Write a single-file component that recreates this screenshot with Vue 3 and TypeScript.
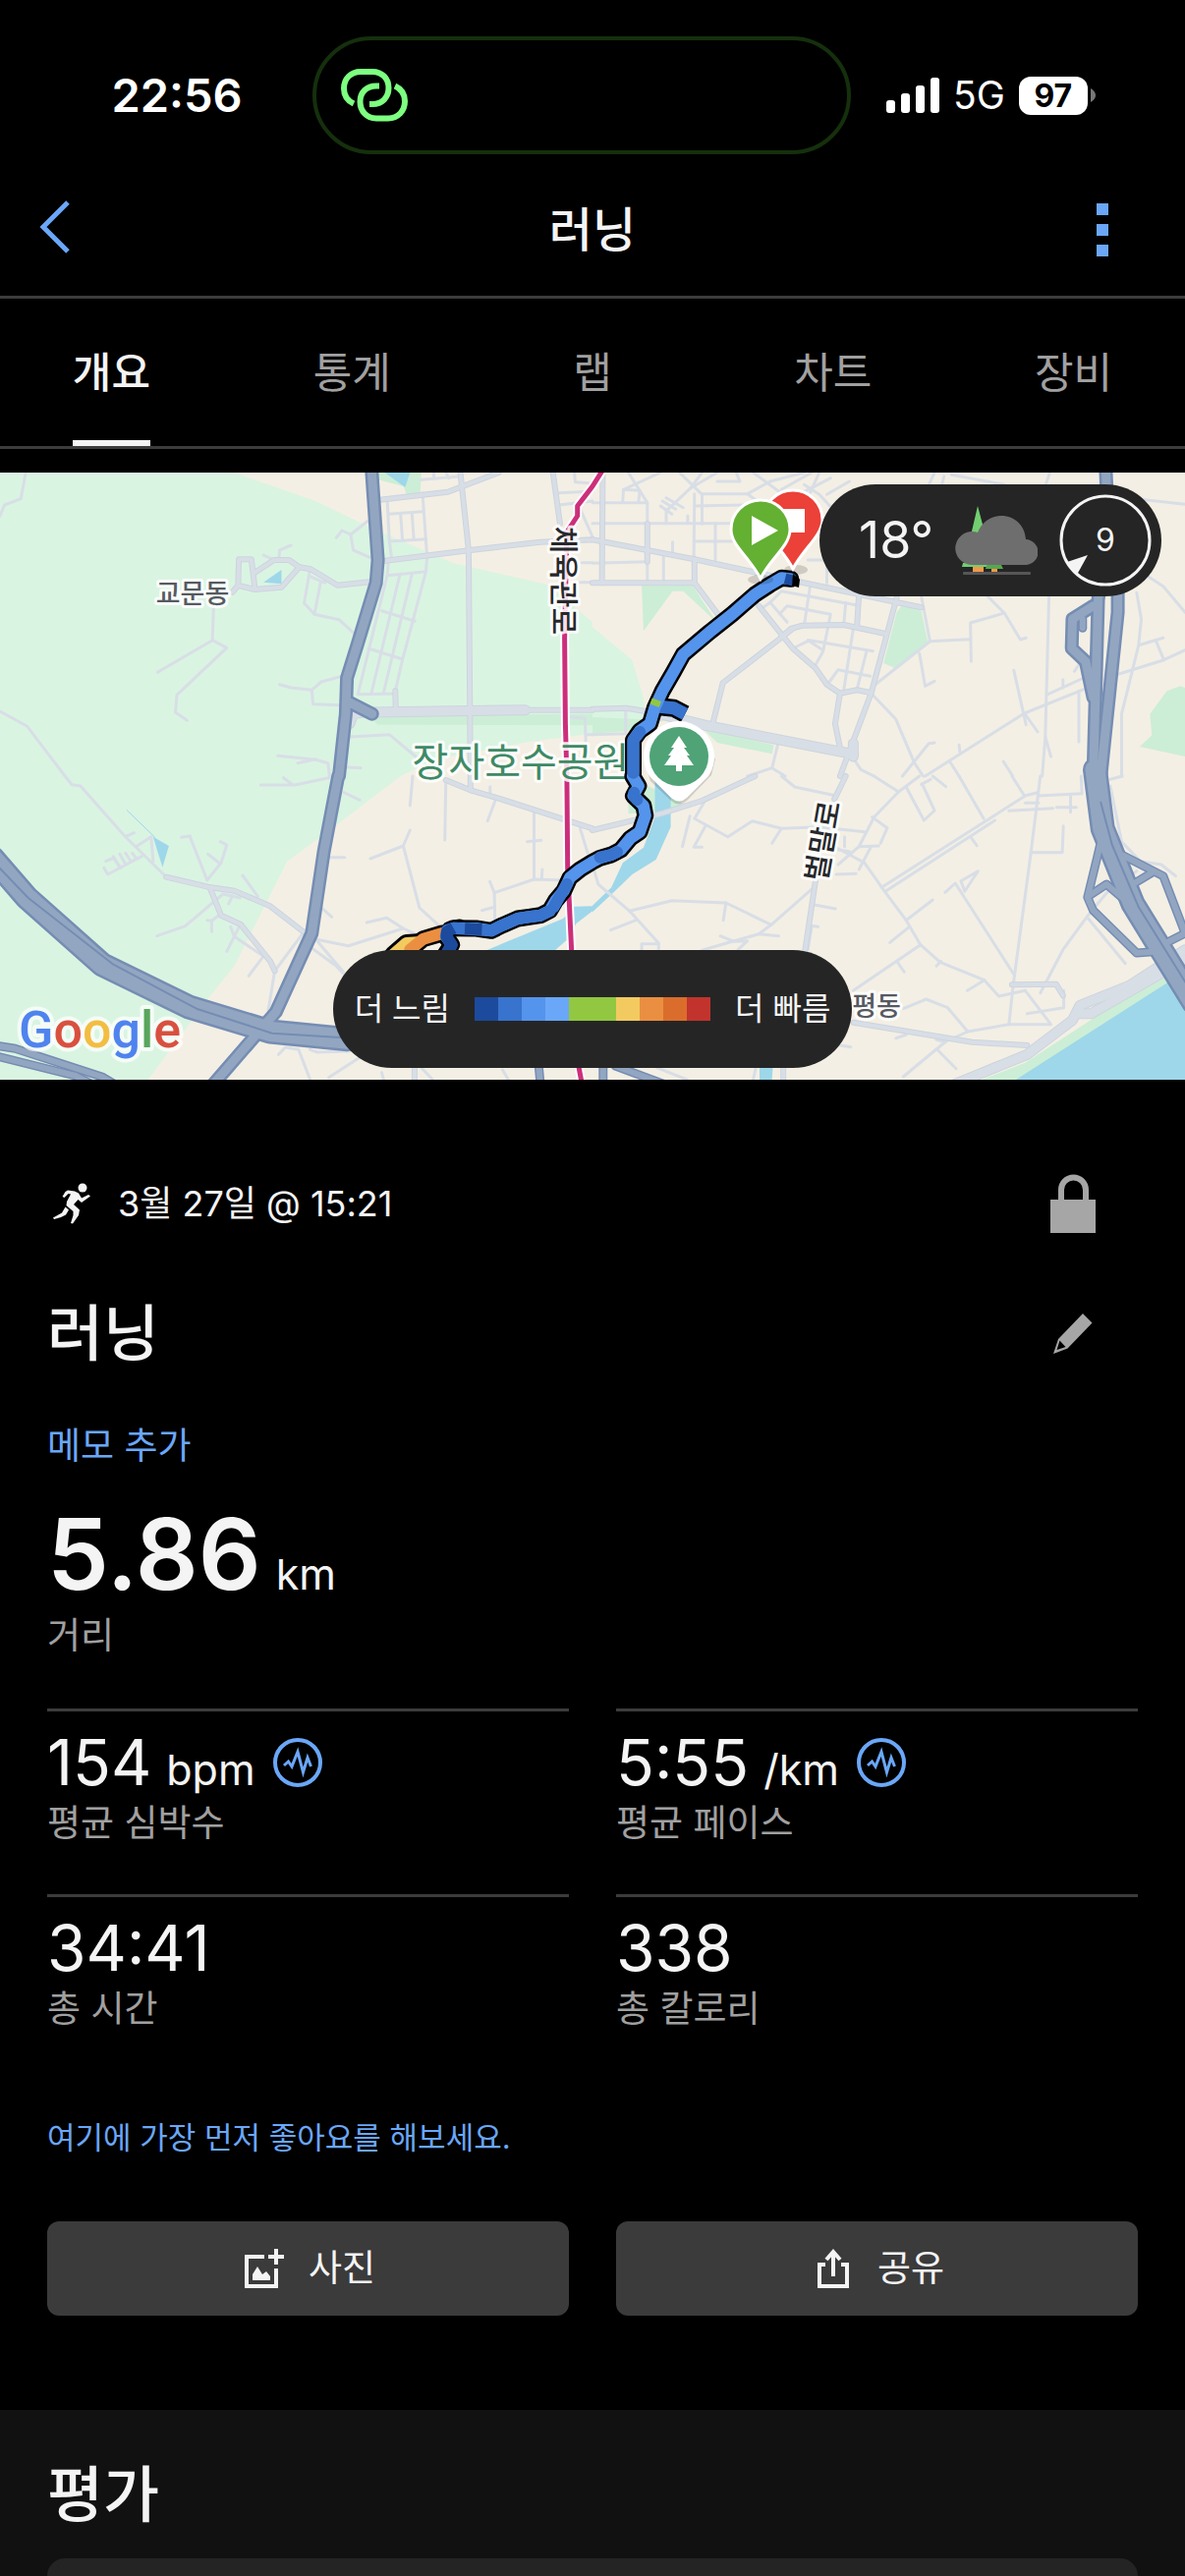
<script setup lang="ts">
import { ref } from 'vue'

type Sheet = 'A' | 'B' | 'C' | 'D'

interface Stat {
  value: string
  unit?: string
  label: string
  chart?: boolean
}

const tabs = ['개요', '통계', '랩', '차트', '장비']
const active = ref('개요')

const stats: Stat[] = [
  { value: '154', unit: 'bpm', label: '평균 심박수', chart: true },
  { value: '5:55', unit: '/km', label: '평균 페이스', chart: true },
  { value: '34:41', label: '총 시간' },
  { value: '338', label: '총 칼로리' },
]

const paceColors = [
  '#1c4a9c', '#3873cd', '#5594ec', '#6aa7f8', '#92c742',
  '#92c742', '#f2ca60', '#ea8f41', '#da6d2c', '#c2332d',
]

const origins: Record<Sheet, [number, number]> = {
  A: [0, -11],
  B: [603, -11],
  C: [0, 309],
  D: [603, 309],
}

function trace(source: string): string {
  let origin = origins.A
  const out: string[] = []
  for (const token of source.split(' ')) {
    if (token in origins) {
      origin = origins[token as Sheet]
      continue
    }
    const [x, y] = token.split(',').map(Number)
    out.push(`${(origin[0] + x / 2.6).toFixed(1)},${(origin[1] + y / 3).toFixed(1)}`)
  }
  return out.join(' ')
}

const forest = trace(
  'A 0,33 620,33 835,120 970,195 1200,310 1450,375 1568,490 B 0,505 105,605 135,720 140,790 0,830 A 1400,855 1150,910 1060,960 C 1060,0 890,150 760,260 690,420 620,580 550,680 390,930 0,930',
)

const parks = [
  'A 1000,33 1115,33 1112,97 1075,99 1068,75 1000,55',
  'A 975,775 1568,770 1568,805 1000,803',
  'B 0,780 190,790 130,820 0,830',
  'B 130,375 265,378 328,490 240,395 212,395 135,517',
  'B 820,437 870,455 887,550 800,630 770,615 805,460',
  'B 1555,685 1568,690 1568,900 1448,870 1480,835 1475,770 1520,700',
  'B 290,812 480,865 475,892 330,858',
  'D 95,0 235,80 235,95 150,110 95,115',
  'D 1030,927 1145,875 1510,600 1568,590 1568,650 1120,927',
].map(trace)

const water = [
  'A 1018,33 1085,33 1072,78',
  'A 697,368 745,330 745,373',
  'C 405,185 447,213 430,278',
  'D 1120,927 1515,635 1568,590 1568,927',
  'B 170,940 215,950 D 207,80 207,155 168,255 105,300 60,350 0,415 0,395 50,340 80,265 135,218 165,125 165,0',
  'C 1290,530 1490,435 1520,398 1568,397 1568,412 1525,450 1500,500 1470,530 1470,560 1250,560',
  'D 442,890 477,890 475,927 442,927',
].map(trace)

const brook = trace('C 335,103 410,187')

const lanes = [
  'A 68,33 55,113 12,132 0,165',
  'A 0,762 72,808 172,960 C 172,0 190,26 213,30 330,183 440,308',
  'A 612,398 630,380', 'A 565,450 562,545 600,568 468,712 464,765 495,790', 'A 562,545 417,643',
  'A 770,255 740,270 738,300', 'A 697,285 725,300', 'A 820,330 805,432 832,466 897,482 935,522',
  'A 832,466 848,370', 'A 820,350 860,370', 'A 890,232 905,210 928,222 972,182', 'A 928,222 935,270 985,295',
  'A 740,680 770,690 825,697 850,672 905,655', 'A 825,697 828,740 900,743',
  'A 1025,120 1030,240 1037,300', 'A 1118,95 1130,290 1127,335', 'A 1028,160 1118,152', 'A 1060,160 1065,240',
  'A 1090,155 1095,238', 'A 1030,243 1128,236', 'A 1028,300 1025,345 947,710 1048,708', 'A 1025,347 1127,335 1065,605 1046,700',
  'A 1058,345 983,705', 'A 1090,343 1015,705', 'A 1010,455 1098,487', 'A 975,570 1065,603',
  'A 735,898 835,910 868,920 872,960', 'A 788,920 835,908', 'A 920,933 955,935', 'A 925,840 1030,833 1100,900',
  'A 1115,55 1215,45', 'A 1148,33 1148,52', 'A 1180,33 1188,50', 'A 1480,95 1568,90', 'A 1480,132 1568,120',
  'A 1520,33 1522,62 1568,66', 'A 1530,130 1568,230', 'A 1540,308 1568,308', 'A 1535,368 1568,368', 'A 1510,780 1548,783 1550,860', 'A 1550,833 1568,833',
  'B 0,125 145,125 145,370 0,370', 'B 0,188 590,188', 'B 80,120 82,85 125,88 122,122', 'B 95,33 145,125', 'B 180,33 82,85',
  'B 0,310 145,305', 'B 230,33 290,100 290,190', 'B 290,33 260,80 200,145', 'B 260,80 330,33', 'B 290,98 410,98 470,60',
  'B 330,60 390,60 380,33', 'B 410,98 470,150', 'B 270,135 400,132', 'B 185,120 220,145', 'B 180,135 210,160', 'B 195,110 240,140',
  'B 195,145 195,188', 'B 252,165 252,188', 'B 270,98 268,300', 'B 325,188 325,300', 'B 268,243 370,243', 'B 212,245 212,285',
  'B 188,290 188,370', 'B 425,33 540,130', 'B 470,60 560,33', 'B 500,85 580,33', 'B 530,110 630,50', 'B 560,70 600,100 640,150',
  'B 600,33 570,110', 'B 620,100 680,60', 'B 570,300 620,300 620,370', 'B 890,70 905,33', 'B 930,45 925,68', 'B 950,40 1090,70',
  'B 1200,68 1210,33', 'B 1450,115 1568,130', 'B 1470,350 1510,380 1568,460', 'B 1440,400 1452,480 1445,560 1400,770 1400,960',
  'B 1445,560 1510,538', 'B 1490,545 1512,605 1568,575', 'B 1512,605 1360,660',
  'B 470,430 500,395 700,438', 'B 575,385 560,500', 'B 495,465 515,440 630,466 610,580 590,620', 'B 670,430 665,495',
  'B 530,570 575,545 742,578', 'B 570,545 610,575', 'B 690,510 665,695', 'B 725,580 700,695', 'B 625,675 650,635 735,655',
  'B 470,430 445,450', 'B 470,430 515,490',
  'B 870,410 893,548 745,683', 'B 893,548 998,542', 'B 1045,410 1090,462 1000,492 1002,610', 'B 1090,462 1132,543 1147,538',
  'B 865,585 880,685 905,670', 'B 1208,410 1198,840 1190,960', 'B 1115,637 1147,803', 'B 740,710 802,785 852,920 875,960',
  'B 1300,695 1143,768 880,960', 'B 1205,710 1300,660', 'B 1245,690 1245,665', 'B 1275,640 1287,620', 'B 1143,768 1178,825', 'B 1198,840 1213,900',
  'B 820,960 890,860 905,858', 'B 970,865 972,885', 'B 945,915 970,960', 'B 1087,915 1112,960', 'B 1287,700 1287,855',
  'B 490,865 475,935 410,960', 'B 475,935 510,960', 'B 690,905 710,940 745,960', 'B 88,760 88,830 0,833',
  'C 335,183 355,173', 'C 360,215 400,185 405,260', 'C 275,280 285,300 375,245', 'C 280,260 300,250 320,280', 'C 300,245 315,275', 'C 317,238 330,265', 'C 332,235 345,258', 'C 350,235 360,250',
  'C 480,187 502,183', 'C 502,183 548,318 585,265 600,210 583,200', 'C 550,238 583,268', 'C 642,303 682,367', 'C 415,488 490,458 590,360 635,372', 'C 605,390 615,365',
  'C 548,440 560,442 560,475', 'C 560,442 585,420', 'C 600,535 635,455', 'C 610,460 620,490 697,550 658,610', 'C 727,595 710,715', 'C 727,595 808,470',
  'C 690,27 780,27 870,5', 'C 750,5 775,27', 'C 910,50 952,73', 'C 870,248 912,248', 'C 852,403 878,430', 'C 835,498 922,518 1067,465 1023,433 970,447',
  'C 835,498 910,600', 'C 825,525 890,580 910,605', 'C 1067,465 1105,485', 'C 1085,90 1092,0', 'C 980,252 1067,213 1085,165', 'C 1067,213 1110,402 1160,455',
  'C 1177,195 1180,10', 'C 1297,32 1297,60', 'C 1290,137 1312,70', 'C 1413,105 1413,315', 'C 1395,200 1432,196', 'C 1495,318 1413,315 1308,356 1296,322', 'C 1308,356 1310,450',
  'C 1275,410 1308,400', 'C 1435,285 1433,315', 'C 1535,160 1555,235', 'C 737,850 755,828 790,835 820,925', 'C 820,835 840,843 925,840', 'C 870,920 950,860', 'C 1115,890 1145,927', 'C 1330,897 1345,927', 'C 1010,905 1015,927',
  'D 500,0 535,33 645,60', 'D 295,80 270,130 358,185 423,137 500,160 600,155 720,170', 'D 300,150 268,217 290,217', 'D 258,122 238,215', 'D 500,160 475,205',
  'D 0,270 15,330 98,412 175,510 175,530', 'D 98,412 210,380 353,387 473,454 585,340', 'D 353,387 346,440', 'D 48,470 115,440', 'D 130,530 130,512 175,512',
  'D 290,532 370,505 440,482 473,454', 'D 440,482 493,488', 'D 338,488 375,505 410,503 385,530', 'D 587,393 643,405', 'D 580,457 597,460', 'D 580,460 570,530',
  'D 745,0 810,48 865,0', 'D 870,25 895,10', 'D 900,0 935,32', 'D 970,0 1035,130', 'D 1110,0 1143,60 1178,50', 'D 740,125 780,158 762,205', 'D 745,125 810,48',
  'D 830,33 877,135 905,105 875,30', 'D 745,125 705,215 650,270', 'D 705,215 757,213', 'D 735,220 705,285', 'D 640,215 720,265 775,355 830,440 868,515 920,568 1037,623 1075,672 1145,655',
  'D 765,340 1145,60', 'D 775,352 1065,135', 'D 1000,185 1017,212', 'D 645,300 697,298', 'D 900,378 830,440', 'D 787,508 835,463', 'D 933,355 960,327 1115,605', 'D 975,320 985,352 1020,290 975,320',
  'D 1145,82 1180,82', 'D 1180,60 1295,53 1293,0', 'D 1102,106 1218,98', 'D 1228,95 1280,95', 'D 1265,60 1265,110', 'D 1185,0 1160,233 1113,640 1102,758',
  'D 1160,233 1243,233 1246,152', 'D 868,515 690,655', 'D 808,570 825,598', 'D 910,580 922,565', 'D 1037,623 992,655', 'D 822,710 883,681 940,707 993,780 1102,758 1213,758 1145,655',
  'D 993,780 935,810 822,918', 'D 803,800 830,790', 'D 912,835 962,893', 'D 910,805 935,812', 'D 1247,655 1247,707 1150,725', 'D 1185,662 1245,530 1308,430 1365,350 1440,290', 'D 1308,430 1410,572',
  'D 1370,10 1402,0', 'D 1370,30 1400,200 1450,260 1505,270 1543,305', 'D 655,822 683,827', 'D 425,927 432,890', 'D 170,890 250,927', 'D 667,185 667,215', 'D 650,225 680,230',
].map(trace)

const streets = [
  'A 1000,117 1185,92 1320,33', 'A 1015,303 1245,270 1430,245 1568,238 B 0,238 270,298 560,370 870,445',
  'A 1218,33 1240,270 1245,960 C 1245,0 1245,40', 'A 1463,33 1482,190', 'A 987,762 1390,758', 'A 1046,700 1047,755', 'A 1400,758 1568,758 B 0,755 90,752 170,768',
  'A 615,398 630,378 675,390 745,383 792,322 765,300 725,300 675,338', 'A 630,378 632,298 665,298 675,390', 'A 792,322 822,328 893,377 985,366',
  'B 27,33 25,370', 'B 145,190 145,305', 'B 270,298 270,370 335,470', 'B 0,370 270,370',
  'B 705,405 700,500', 'B 805,415 738,705 655,960', 'B 440,440 530,570 590,630 620,680 655,707 700,697 735,705', 'B 530,510 345,675 318,800', 'B 500,535 525,510 555,500 665,498 775,525',
  'B 655,707 642,800 657,885', 'C 1180,12 1245,43 1320,68 1568,160 D 0,165 180,115 290,75 430,0', 'D 670,0 640,70', 'D 590,320 562,535',
  'C 440,308 550,338 620,350 715,397 808,480', 'C 555,340 585,425 637,453 715,565 727,595', 'C 1097,890 1097,927', 'D 505,890 505,927',
  'D 690,752 1005,812 1150,822', 'D 1110,637 1227,635 1245,670',
].map(trace)

const avenues = [
  'A 987,765 1390,758', 'B 170,768 300,805 500,850 690,893', 'B 690,860 690,900',
  'D 960,940 1150,850 1270,745 1290,700 1420,640 1568,530', 'D 1280,725 1320,725 1568,560', 'A 925,800 935,770 960,765',
].map(trace)

const motorways = [
  'A 983,20 1000,300 995,370 945,560 918,660 915,770 897,960 C 895,0 857,230 825,480 730,720 565,940',
  'A 925,735 985,770',
  'B 1358,20 1365,200 1338,420 1325,960 D 1330,0 1350,160',
  'B 1390,400 1390,460 1345,960',
  'B 1325,440 1270,480 1268,570 1305,610 1325,720',
].map(trace)

const trunks = [
  'C -20,250 70,370 270,575 500,705 715,780 920,803',
  'D 1330,-20 1350,160 1430,390 1590,690',
].map(trace)

const ramps = [
  'B 1297,480 1297,508', 'D 1345,200 1335,250 1310,370 1325,410 1440,540 1500,535', 'D 1318,362 1360,330 1400,370', 'D 1400,240 1510,305 1568,480', 'D 1430,330 1480,295',
  'C -10,823 40,832 270,918 310,945', 'C -10,855 200,915 250,945', 'C 1425,880 1430,940', 'D 28,880 28,940', 'D 60,885 200,945', 'D 1500,520 1568,480',
].map(trace)

const medians = [
  'C -10,270 75,372 300,575 520,710 720,785 900,798',
  'D 1345,80 1375,210 1445,400 1580,650',
].map(trace)

const subway = trace('B 30,20 0,75 A 1528,135 1528,165 1500,215 1494,540 1496,800 C 1500,0 1502,280 1515,600 1530,880 1540,940')

const route = trace(
  'B 525,358 500,355 470,375 430,405 370,465 310,520 240,588 215,640 185,700 165,750 152,800 125,822 108,850 108,960 D 106,0 122,30 108,60 135,90 140,120 125,170 100,190 75,225 50,240 20,250 0,262 C 1535,285 1508,310 1492,350 1470,380 1455,410 1430,425 1400,430 1370,435 1330,455 1300,472 1260,465 1200,464',
)
const loop = trace('C 1215,462 1190,468 1180,490 1195,515 1175,550')
const routeDark = trace('C 1500,330 1480,370 1465,400')
const routeMid = trace('C 1455,412 1430,425 1400,430 1370,435 1330,455 1300,472 1200,464 1183,470 1180,490 1195,515 1180,545')
const routeNight = trace('C 1275,468 1230,466')
const routeNight2 = trace('C 1200,464 1183,475 1182,490 1195,515 1180,545')
const orange = trace('C 1170,480 1120,497 1085,530')
const yellow = trace('C 1105,508 1075,510 1040,545')
const spur = trace('B 178,748 215,752 245,770')
const dusk1 = trace('D 110,50 110,60 118,72')
const dusk2 = trace('D 65,232 50,240 20,248')
const dusk3 = trace('B 125,825 108,850 108,950')
const lime = trace('B 170,727 164,745')
</script>

<template>
  <div class="page">
    <div class="status">
      <time class="clock">22:56</time>
      <div class="island">
        <svg width="68" height="54" viewBox="0 0 68 54" fill="none" stroke="#7dff80" stroke-width="6" aria-hidden="true">
          <path d="M13 35.500C6.500 32.500 3 27 3 20C3 10 10 3 20 3H32C42 3 48.500 10 48.500 19.500C48.500 29 42 36 32 36H29" />
          <path d="M55 17.500C61.500 20.500 65 26 65 33C65 43 58 50.500 48 50.500H36C26 50.500 19.500 43 19.500 33.500C19.500 24 26 17.500 36 17.500H39" />
        </svg>
      </div>
      <div class="signals">
        <svg width="54" height="36" viewBox="0 0 54 36" fill="#fff" aria-hidden="true">
          <rect x="0" y="23" width="9" height="13" rx="3" />
          <rect x="15" y="16" width="9" height="20" rx="3" />
          <rect x="30" y="8" width="9" height="28" rx="3" />
          <rect x="45" y="0" width="9" height="36" rx="3" />
        </svg>
        <span class="network">5G</span>
        <div class="battery">
          <span class="charge">97</span>
          <svg width="6" height="14" viewBox="0 0 6 14" aria-hidden="true"><path d="M1 0Q6 3 6 7T1 14Z" fill="#77777a" /></svg>
        </div>
      </div>
    </div>

    <header class="nav">
      <button class="back" type="button" aria-label="뒤로">
        <svg width="32" height="54" viewBox="0 0 32 54" fill="none" stroke="#6aa7f8" stroke-width="5"><path d="M29 2L4 27L29 52" /></svg>
      </button>
      <h1 class="nav-title">러닝</h1>
      <button class="more" type="button" aria-label="더 보기">
        <svg width="12" height="54" viewBox="0 0 12 54" fill="#6aa7f8"><path d="M0 0H12V12H0ZM0 21H12V33H0ZM0 42H12V54H0Z" /></svg>
      </button>
    </header>

    <div class="tab-strip">
      <nav class="tabs" role="tablist">
        <button
          v-for="tab in tabs"
          :key="tab"
          type="button"
          role="tab"
          class="tab"
          :class="{ active: tab === active }"
          :aria-selected="tab === active"
          @click="active = tab"
        >
          <span class="tab-label">{{ tab }}</span>
        </button>
      </nav>
    </div>

    <section class="map" aria-label="경로 지도">
      <svg class="canvas" viewBox="0 0 1206 618">
        <rect width="1206" height="618" fill="#f4efe4" />
        <polygon :points="forest" fill="#daf4e2" />
        <polygon v-for="(p, i) in parks" :key="'p' + i" :points="p" fill="#cceed6" />
        <polygon v-for="(p, i) in water" :key="'w' + i" :points="p" fill="#9ed7ea" />
        <polyline :points="brook" stroke="#9ed7ea" stroke-width="1" fill="none" />
        <g class="road" stroke="#d8dee6">
          <polyline v-for="(p, i) in lanes" :key="i" :points="p" stroke-width="3" />
        </g>
        <g class="road" stroke="#ccd4de">
          <polyline v-for="(p, i) in streets" :key="i" :points="p" stroke-width="6" />
          <polyline v-for="(p, i) in avenues" :key="'a' + i" :points="p" stroke-width="11" />
        </g>
        <g class="road" stroke="#d8dee6">
          <polyline v-for="(p, i) in streets" :key="i" :points="p" stroke-width="4" />
          <polyline v-for="(p, i) in avenues" :key="'a' + i" :points="p" stroke-width="9" />
        </g>
        <g class="road" stroke="#758db3">
          <polyline v-for="(p, i) in ramps" :key="'r' + i" :points="p" stroke-width="9" />
          <polyline v-for="(p, i) in motorways" :key="'m' + i" :points="p" stroke-width="14" />
          <polyline v-for="(p, i) in trunks" :key="'t' + i" :points="p" stroke-width="25" />
        </g>
        <g class="road" stroke="#93a6c1">
          <polyline v-for="(p, i) in ramps" :key="'r' + i" :points="p" stroke-width="6" />
          <polyline v-for="(p, i) in motorways" :key="'m' + i" :points="p" stroke-width="9" />
          <polyline v-for="(p, i) in trunks" :key="'t' + i" :points="p" stroke-width="20" />
        </g>
        <g class="road" stroke="#758db3">
          <polyline v-for="(p, i) in medians" :key="i" :points="p" stroke-width="2" />
        </g>
        <g class="road">
          <polyline :points="subway" stroke="#fff" stroke-width="9" />
          <polyline :points="subway" stroke="#cc2f7a" stroke-width="5" />
        </g>

        <g class="label">
          <text x="196" y="133" font-size="27" fill="#555a62">교문동</text>
          <text x="892" y="553" font-size="27" fill="#555a62">평동</text>
          <text class="park-name" x="530" y="309" font-size="40" fill="#3f8a65">장자호수공원</text>
          <text transform="translate(563 110) rotate(90)" font-size="30" fill="#26282b">체육관로</text>
          <text transform="translate(848 377) rotate(-80)" font-size="30" fill="#26282b">벌말로</text>
        </g>

        <g class="road">
          <polyline :points="loop" stroke="#000" stroke-width="17" />
          <polyline :points="yellow" stroke="#000" stroke-width="18" />
          <polyline :points="orange" stroke="#000" stroke-width="17" />
          <polyline :points="spur" stroke="#000" stroke-width="18" stroke-linecap="butt" />
          <polyline :points="route" stroke="#000" stroke-width="17" />
          <polyline :points="yellow" stroke="#f2ca60" stroke-width="12" />
          <polyline :points="orange" stroke="#ea8f41" stroke-width="12" />
          <polyline :points="spur" stroke="#3873cd" stroke-width="13" stroke-linecap="butt" />
          <polyline :points="route" stroke="#5594ec" stroke-width="12" />
          <g stroke="#3873cd" stroke-width="12">
            <polyline :points="routeDark" />
            <polyline :points="routeMid" />
            <polyline :points="dusk1" />
            <polyline :points="dusk2" />
            <polyline :points="dusk3" />
          </g>
          <g stroke="#1c4a9c" stroke-width="12" stroke-linecap="butt">
            <polyline :points="routeNight" />
            <polyline :points="routeNight2" />
          </g>
          <polyline :points="lime" stroke="#92c742" stroke-width="10" stroke-linecap="butt" />
          <path d="M799 108l8 2" stroke="#1c4a9c" stroke-width="11" stroke-linecap="butt" />
          <path d="M807 103L814 109L813 117L806 115Z" fill="#000" />
        </g>

        <ellipse cx="774" cy="109" rx="13" ry="5" fill="#000" opacity=".15" />
        <ellipse cx="810" cy="99" rx="12" ry="5" fill="#000" opacity=".15" />
        <g stroke="#fff" stroke-width="3">
          <path d="M807 98C797 78 777 64 777 48A30 30 0 0 1 837 48C837 64 817 78 807 98Z" fill="#ec4138" />
          <path d="M795 37H819V61H795Z" fill="#fff" stroke="none" />
          <path d="M774 108C764 87 744 75 744 58A30 30 0 0 1 804 58C804 75 784 87 774 108Z" fill="#64b032" />
          <path d="M765 44L792 59L765 74Z" fill="#fff" stroke="none" />
        </g>

        <path d="M662 314L683 334Q691 341 699 334L724 308L728 292A36 36 0 0 0 660 308Z" fill="#000" opacity=".15" />
        <path d="M661 309A36 36 0 1 1 721 309L699 331Q691 338 683 331Z" fill="#fff" />
        <circle cx="691" cy="289" r="30" fill="#4fa377" />
        <path d="M691 268L699 280H696L702 288H699L706 298H694V304H688V298H676L683 288H680L686 280H683Z" fill="#fff" />

        <text class="brand" x="19" y="585">
          <tspan fill="#4f83ee">G</tspan><tspan fill="#d9503f">o</tspan><tspan fill="#f3bd42">o</tspan><tspan fill="#4f83ee">g</tspan><tspan fill="#58a55c">l</tspan><tspan fill="#d9503f">e</tspan>
        </text>
      </svg>

      <div class="weather">
        <span class="degrees">18°</span>
        <svg width="84" height="70" viewBox="0 0 84 70" aria-hidden="true">
          <path d="M23 0L16 30H31Z" fill="#72cf70" />
          <path d="M18 62h11v5h-11z" fill="#f09a48" />
          <path d="M37 63h6v4h-6z" fill="#f09a48" />
          <path d="M8 58H36L40 62H7Z" fill="#72cf70" />
          <path d="M33 58H46L49 64H31Z" fill="#55a84f" />
          <path d="M17 60A17 17 0 1 1 23 27C27 17 36 10 47 10C61 10 71 20 72 34A13 13 0 0 1 71 60Z" fill="#6e6e6e" />
          <rect x="8" y="67" width="69" height="3" rx="1" fill="#565656" />
        </svg>
        <div class="wind">
          <svg class="dial" width="94" height="94" viewBox="-47 -47 94 94" aria-hidden="true">
            <circle r="45" fill="none" stroke="#f4f4f4" stroke-width="3" />
            <path d="M-18 15L-39 22Q-35 29 -29 35Z" fill="#f4f4f4" />
          </svg>
          <span>9</span>
        </div>
      </div>

      <div class="legend">
        <span>더 느림</span>
        <div class="scale">
          <i v-for="(color, i) in paceColors" :key="i" :style="{ background: color }"></i>
        </div>
        <span>더 빠름</span>
      </div>
    </section>

    <main class="summary">
      <div class="meta">
        <svg class="runner" width="38" height="42" viewBox="0 0 38 42" fill="#f4f4f4" aria-hidden="true">
          <circle cx="30" cy="5" r="4.500" />
          <path d="M15 7.500L22 8.500L26 10.500L29 15.500L36 12L38 13.500L29 20L25.500 17L21 22L27 27.500L26 33L20 41.500L18 41L20.500 33L20.500 29L13.500 23L14 19L18 11.500L15.500 11L11.500 15L9.500 14L12.500 9Z" />
          <path d="M12.500 24.500L16 27.500L13 32.500L8 35L1 37L0 35.500L9 30.500Z" />
        </svg>
        <time class="date">3월 27일 @ 15:21</time>
        <button class="tool" type="button" aria-label="공개 범위">
          <svg width="46" height="60" viewBox="0 0 46 60" fill="#a6a6a6"><path d="M0 26H8V16a15.500 15.500 0 0 1 31 0V26H46V60H0ZM14 26H33V16a9.500 9.500 0 0 0-19 0Z" fill-rule="evenodd" /></svg>
        </button>
      </div>

      <div class="title-row">
        <h2 class="heading">러닝</h2>
        <button class="tool" type="button" aria-label="이름 수정">
          <svg width="40" height="42" viewBox="0 0 40 42" fill="#a6a6a6"><path d="M30 0L39.500 9.500L14.500 35.500L0 41L5 26ZM6.500 27.500L3.500 37L12.500 34Z" fill-rule="evenodd" /></svg>
        </button>
      </div>

      <a class="memo" href="#">메모 추가</a>

      <p class="distance">5.86<span class="unit">km</span></p>
      <p class="caption">거리</p>

      <div class="stats">
        <div v-for="stat in stats" :key="stat.label" class="stat">
          <div class="stat-line">
            <p class="value">{{ stat.value }}<span v-if="stat.unit" class="unit">{{ stat.unit }}</span></p>
            <button v-if="stat.chart" class="chart" type="button" aria-label="차트 보기">
              <svg width="50" height="50" viewBox="0 0 50 50" fill="none" stroke="#6aa7f8">
                <circle cx="25" cy="25" r="23" stroke-width="4" />
                <path d="M11 28L15.500 24L19 29L25 14L30.500 35L35 20L38.500 29" stroke-width="3" />
              </svg>
            </button>
          </div>
          <p class="caption">{{ stat.label }}</p>
        </div>
      </div>

      <a class="like" href="#">여기에 가장 먼저 좋아요를 해보세요.</a>

      <div class="actions">
        <button class="action" type="button">
          <svg width="40" height="40" viewBox="0 0 40 40" fill="none" stroke="#f4f4f4" stroke-width="4" aria-hidden="true">
            <path d="M20 8H2V38H32V20M24 8H40M32 0V16" />
            <path d="M8 32V26L13 18L18 26L22 23L26 28V32Z" fill="#f4f4f4" stroke="none" />
          </svg>
          <span>사진</span>
        </button>
        <button class="action" type="button">
          <svg width="40" height="40" viewBox="0 0 40 40" fill="none" stroke="#f4f4f4" stroke-width="4" aria-hidden="true">
            <path d="M12 16H6V38H34V16H28M20 28V4M13 11L20 3L27 11" />
          </svg>
          <span>공유</span>
        </button>
      </div>
    </main>

    <section class="rating">
      <h2 class="heading">평가</h2>
      <div class="card"></div>
    </section>
  </div>
</template>

<style>
body {
  background: #000;
}
</style>

<style scoped>
.page {
  display: flex;
  flex-direction: column;
  min-height: 100vh;
  background: #000;
  color: #f4f4f4;
  font-family: Inter, "Noto Sans CJK KR", sans-serif;
  font-size: 37px;
  line-height: 48px;
}

p,
h1,
h2 {
  margin: 0;
}

button {
  display: flex;
  align-items: center;
  justify-content: center;
  padding: 0;
  border: 0;
  background: none;
  color: inherit;
  font: inherit;
}

a {
  color: #6aa7f8;
  text-decoration: none;
}

svg {
  display: block;
  flex: none;
}

.status {
  display: grid;
  grid-template-columns: 318fr 548fr 340fr;
  align-items: center;
  padding: 37px 0 10px;
  color: #fff;
}

.clock {
  padding-left: 42px;
  text-align: center;
  font-size: 47px;
  font-weight: 600;
}

.island {
  display: flex;
  align-items: center;
  box-sizing: border-box;
  height: 120px;
  padding-left: 25px;
  border: 4px solid #15300c;
  border-radius: 60px;
}

.signals {
  display: flex;
  align-items: center;
  gap: 14px;
  padding-left: 36px;
}

.network {
  font-size: 39px;
}

.battery {
  display: flex;
  align-items: center;
  gap: 2px;
}

.charge {
  width: 70px;
  border-radius: 12px;
  background: #fff;
  color: #000;
  font-size: 32px;
  font-weight: 700;
  line-height: 39px;
  text-align: center;
}

.nav {
  display: grid;
  grid-template-columns: 1fr auto 1fr;
  align-items: center;
  height: 134px;
  border-bottom: 3px solid #3c3c3c;
}

.back {
  justify-self: start;
  padding: 0 0 6px 40px;
}

.nav-title {
  font-size: 48px;
  font-weight: 500;
}

.more {
  justify-self: end;
  padding-right: 78px;
}

.tab-strip {
  overflow: hidden;
  margin-bottom: 24px;
  border-bottom: 3px solid #3c3c3c;
}

.tabs {
  display: grid;
  grid-template-columns: repeat(5, 1fr);
  margin: 0 -9px;
}

.tab {
  height: 150px;
  color: #a0a0a0;
  font-size: 43px;
}

.tab-label {
  box-sizing: border-box;
  height: 150px;
  line-height: 150px;
}

.active {
  color: #f4f4f4;
  font-weight: 500;
}

.active .tab-label {
  border-bottom: 6px solid #f4f4f4;
}

.map {
  position: relative;
  overflow: hidden;
}

.canvas {
  width: 100%;
  height: auto;
}

.road {
  fill: none;
  stroke-linecap: round;
  stroke-linejoin: round;
}

.label {
  font-family: "Noto Sans CJK KR", sans-serif;
  font-weight: 500;
  text-anchor: middle;
  paint-order: stroke;
  stroke: #ffffffd9;
  stroke-width: 6px;
  stroke-linejoin: round;
}

.park-name {
  font-weight: 400;
}

.brand {
  font-family: Roboto, sans-serif;
  font-size: 52px;
  font-weight: 500;
  paint-order: stroke;
  stroke: #ffffffb3;
  stroke-width: 8px;
  stroke-linejoin: round;
}

.weather {
  position: absolute;
  top: 12px;
  right: 24px;
  display: flex;
  align-items: center;
  justify-content: space-between;
  box-sizing: border-box;
  width: 348px;
  height: 114px;
  padding: 0 10px 0 40px;
  border-radius: 57px;
  background: #252525;
}

.degrees {
  font-size: 52px;
}

.wind {
  display: grid;
  place-items: center;
  font-size: 32px;
}

.wind > * {
  grid-area: 1 / 1;
}

.legend {
  position: absolute;
  bottom: 12px;
  left: 50%;
  display: flex;
  align-items: center;
  justify-content: center;
  gap: 25px;
  width: 528px;
  height: 120px;
  margin-left: -264px;
  border-radius: 60px;
  background: #252525;
  font-size: 32px;
  white-space: nowrap;
}

.scale {
  display: flex;
  width: 240px;
  height: 24px;
}

.scale i {
  flex: 1;
}

.summary {
  padding: 96px 48px;
}

.meta {
  display: flex;
  align-items: center;
  height: 60px;
}

.runner {
  margin: 0 28px 0 6px;
}

.date {
  font-size: 36px;
}

.tool {
  width: 84px;
  height: 60px;
  margin-left: auto;
  margin-right: 24px;
}

.title-row {
  display: flex;
  align-items: center;
  margin-top: 73px;
}

.heading {
  font-size: 62px;
  font-weight: 500;
  line-height: 60px;
}

.memo {
  display: block;
  width: fit-content;
  margin-top: 60px;
}

.distance {
  margin-top: 36px;
  font-size: 100px;
  font-weight: 600;
  line-height: 100px;
}

.distance + .caption {
  margin-top: 9px;
}

.unit {
  margin-left: 15px;
  font-size: 43px;
  font-weight: 400;
  line-height: 43px;
}

.caption {
  color: #a0a0a0;
}

.stats {
  display: grid;
  grid-template-columns: 1fr 1fr;
  column-gap: 48px;
  margin-top: 50px;
}

.stat {
  padding: 20px 0 48px;
  border-top: 3px solid #3c3c3c;
}

.stat-line {
  display: flex;
  align-items: center;
  gap: 18px;
  height: 64px;
  margin-bottom: 6px;
}

.value {
  font-size: 64px;
  line-height: 64px;
}

.like {
  display: block;
  width: fit-content;
  margin-top: 35px;
  font-size: 31px;
}

.actions {
  display: grid;
  grid-template-columns: 1fr 1fr;
  gap: 48px;
  margin-top: 61px;
}

.action {
  gap: 25px;
  height: 96px;
  padding-left: 4px;
  border-radius: 12px;
  background: #3b3b3b;
}

.rating {
  display: flex;
  flex: 1;
  flex-direction: column;
  padding: 57px 48px 0;
  background: #111;
}

.card {
  flex: 1;
  min-height: 18px;
  margin-top: 34px;
  border-radius: 24px 24px 0 0;
  background: #242424;
}
</style>
